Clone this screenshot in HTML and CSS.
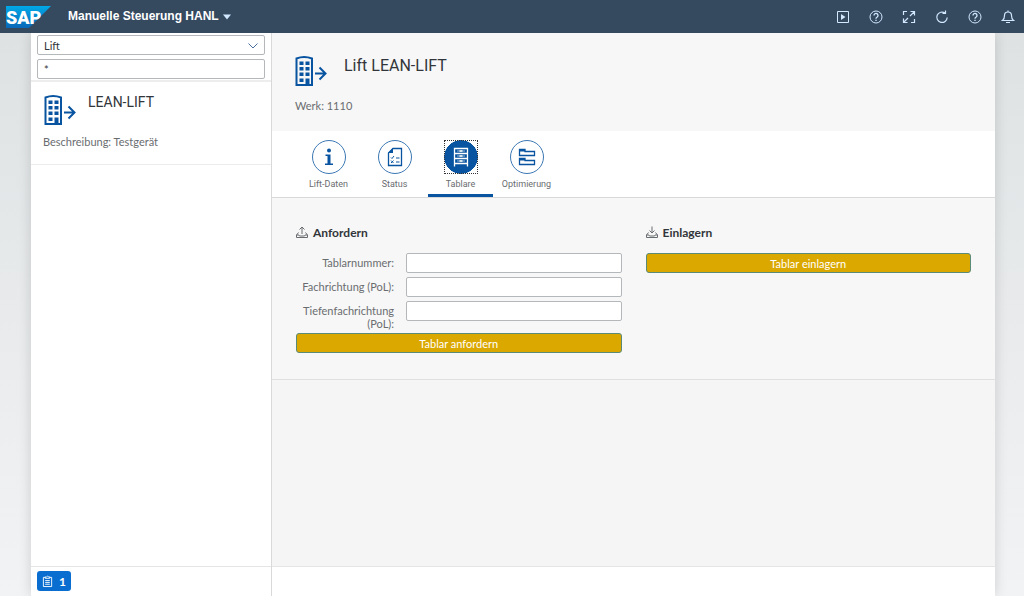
FILE: index.html
```html
<!DOCTYPE html>
<html lang="de">
<head>
    <meta charset="UTF-8">
    <meta name="viewport" content="width=device-width, initial-scale=1.0">
    <title>Manuelle Steuerung HANL</title>
    <link rel="stylesheet" href="styles.css">
</head>
<body>
    <!-- Shared symbols -->
    <svg class="symbols" aria-hidden="true">
        <symbol id="lift" viewBox="0 0 32 32">
            <path d="M1.500 30V3.500Q9 .5 17 3.500V30Z" fill="none" stroke="currentColor" stroke-width="2"/>
            <path d="M4.500 6.500h4v3.500h-4zM10.500 6.500h4v3.500h-4zM4.500 12h4v3.500h-4zM10.500 12h4v3.500h-4zM4.500 17.500h4v3.500h-4zM10.500 17.500h4v3.500h-4zM4.500 23.500h4v3.500h-4zM10.500 23.500h4v6h-4z" fill="currentColor"/>
            <path d="M20 18.500h10M24.500 12.500l6 6-6 6" fill="none" stroke="currentColor" stroke-width="2"/>
        </symbol>
        <symbol id="help" viewBox="0 0 14 14">
            <circle cx="7" cy="7" r="6"/>
            <path d="M5 5.500a2 2 0 1 1 3.200 1.500Q7 7.700 7 8.700M7 9.700v1.300" stroke-width="1.300"/>
        </symbol>
    </svg>

    <header class="shell">
        <svg class="logo" viewBox="0 0 45 22" role="img" aria-label="SAP">
            <defs>
                <linearGradient id="sapBlue" x1="0" y1="0" x2="0" y2="1">
                    <stop offset="0" stop-color="#00a9e8"/>
                    <stop offset="1" stop-color="#0a67b8"/>
                </linearGradient>
            </defs>
            <path d="M0 0H45L23 22H0Z" fill="url(#sapBlue)"/>
            <text class="logo-text" x="0" y="18">SAP</text>
        </svg>
        <button class="shell-title">Manuelle Steuerung HANL
            <svg class="caret" viewBox="0 0 8 6"><path d="M0 .5h8L4 5.500z"/></svg>
        </button>
        <nav class="shell-actions">
            <button class="shell-btn" aria-label="Abspielen">
                <svg viewBox="0 0 14 14"><path d="M1.500 1.500h11v11h-11z"/><path class="solid" d="M5 4l4.500 3L5 10z"/></svg>
            </button>
            <button class="shell-btn" aria-label="Hilfe"><svg><use href="#help"/></svg></button>
            <button class="shell-btn" aria-label="Vollbild">
                <svg viewBox="0 0 14 14"><path d="M5 1.500H1.500V5M9 12.500h3.500V9M8.500 1.500H12.500v4M12.500 1.500L8 6M1.500 8.500V12.500h4M1.500 12.500l4.500-4.500" stroke-width="1.200"/></svg>
            </button>
            <button class="shell-btn" aria-label="Aktualisieren">
                <svg viewBox="0 0 14 14"><path d="M10 3A5.200 5.200 0 1 0 12.200 7.500M10.500 .5V3.500H7.500" stroke-width="1.200"/></svg>
            </button>
            <button class="shell-btn" aria-label="Support"><svg><use href="#help"/></svg></button>
            <button class="shell-btn" aria-label="Benachrichtigungen">
                <svg viewBox="0 0 14 14"><path d="M1.500 10.500Q3.500 9 3.500 5.500A3.500 3.500 0 0 1 10.500 5.500Q10.500 9 12.500 10.500ZM7 .5V2M5 12.500h4" stroke-width="1.200"/></svg>
            </button>
        </nav>
    </header>

    <div class="app">
        <aside class="sidebar">
            <div class="filter">
                <div class="select-wrap">
                    <select class="field" aria-label="Gerätetyp">
                        <option>Lift</option>
                    </select>
                    <svg class="chevron" viewBox="0 0 10 6"><path d="M.5 .5L5 5 9.500 .5"/></svg>
                </div>
                <input class="field" type="text" value="*" aria-label="Suche">
            </div>
            <div class="device">
                <div class="device-head">
                    <svg class="lift-icon"><use href="#lift"/></svg>
                    <h2 class="device-name">LEAN-LIFT</h2>
                </div>
                <p class="note">Beschreibung: Testgerät</p>
            </div>
            <footer class="sidebar-footer">
                <button class="messages">
                    <svg viewBox="0 0 12 14"><path d="M3.500 2.500h-2v10h9v-10h-2M3.500 3.500V2h1.500Q6 0 7 2h1.500v1.500zM3.500 6h5M3.500 8h5M3.500 10h5"/></svg>
                    1
                </button>
            </footer>
        </aside>

        <main class="main">
            <div class="object-header">
                <div class="object-head">
                    <svg class="lift-icon"><use href="#lift"/></svg>
                    <h1 class="object-title">Lift LEAN-LIFT</h1>
                </div>
                <p class="note">Werk: 1110</p>
            </div>

            <div class="tabs" role="tablist">
                <button class="tab" role="tab">
                    <span class="tab-icon">
                        <svg viewBox="0 0 20 20"><circle class="solid" cx="10" cy="3.500" r="2"/><path class="solid" d="M6.500 7.500h5v9h2.500v1.500h-8V16.500h2.500V9h-2z"/></svg>
                    </span>
                    Lift-Daten
                </button>
                <button class="tab" role="tab">
                    <span class="tab-icon">
                        <svg viewBox="0 0 20 20"><path d="M8 1.500h8.500v17h-13V6z" stroke-width="1.300"/><path class="solid" d="M8 1v5H3z"/><path d="M6 10.500l1 1 2-2.500M11 11h3.500M6 13.500l2.500 2.500M8.500 13.500L6 16M11 15h3.500"/></svg>
                    </span>
                    Status
                </button>
                <button class="tab active" role="tab" aria-selected="true">
                    <span class="tab-icon">
                        <svg viewBox="0 0 20 20"><path d="M3.500 19.500V1.500h13V19.500M3.500 6.500h13M3.500 11.500h13M3.500 16.500h13" stroke-width="1.300"/><path d="M6 4h8M6 9h8M6 14h8" stroke-opacity=".6"/><path d="M8.500 4h3M8.500 9h3M8.500 14h3" stroke-width="1.500"/></svg>
                    </span>
                    Tablare
                </button>
                <button class="tab" role="tab">
                    <span class="tab-icon">
                        <svg viewBox="0 0 20 20"><path d="M2.500 2.500H8V4.500h9.500v4h-15zM2.500 11.500H8V13.500h9.500v4h-15z" stroke-width="1.300"/><path d="M2.500 3.500H8M2.500 12.500H8" stroke-width="2"/></svg>
                    </span>
                    Optimierung
                </button>
            </div>

            <div class="panels">
                <form class="panel">
                    <h3 class="panel-title">
                        <svg viewBox="0 0 12 12"><path d="M6 8V1M3.500 3.500L6 1l2.500 2.500M2.500 6.500L.5 9v2.500h11V9l-2-2.500M.5 9H3q0 1 1 1h4q1 0 1-1h2.500"/></svg>
                        Anfordern
                    </h3>
                    <div class="form-row">
                        <label for="tablar">Tablarnummer:</label>
                        <input class="field" type="text" id="tablar">
                    </div>
                    <div class="form-row">
                        <label for="fach">Fachrichtung (PoL):</label>
                        <input class="field" type="text" id="fach">
                    </div>
                    <div class="form-row">
                        <label for="tiefe">Tiefenfachrichtung (PoL):</label>
                        <input class="field" type="text" id="tiefe">
                    </div>
                    <button type="button" class="btn">Tablar anfordern</button>
                </form>
                <div class="panel">
                    <h3 class="panel-title">
                        <svg viewBox="0 0 12 12"><path d="M6 .5V7M3.500 4.500L6 7l2.500-2.500M2.500 6.500L.5 9v2.500h11V9l-2-2.500M.5 9H3q0 1 1 1h4q1 0 1-1h2.500"/></svg>
                        Einlagern
                    </h3>
                    <button type="button" class="btn">Tablar einlagern</button>
                </div>
            </div>
            <footer class="main-footer"></footer>
        </main>
    </div>
</body>
</html>
```
FILE: styles.css
```css
* {
    box-sizing: border-box;
}

body {
    display: flex;
    flex-direction: column;
    min-height: 100vh;
    margin: 0;
    font-family: Lato, Roboto, sans-serif;
    font-size: 11px;
    line-height: 13px;
    color: #32363a;
    background: linear-gradient(#dde1e2, #f2f3f5);
}

h1, h2, h3, p {
    margin: 0;
    font-weight: normal;
}

button, input, select {
    font: inherit;
}

button {
    border: none;
    padding: 0;
    background: none;
    cursor: pointer;
}

svg {
    fill: none;
    stroke: currentColor;
    flex: none;
}

.symbols {
    position: absolute;
    width: 0;
    height: 0;
}

.solid {
    fill: currentColor;
    stroke: none;
}

/* Shell bar */
.shell {
    display: flex;
    align-items: center;
    height: 33px;
    padding: 0 9px 0 6px;
    background-color: #354a5f;
    color: #d1e8ff;
}

.logo {
    width: 45px;
    height: 22px;
    stroke: none;
}

.logo-text {
    font-family: Roboto, sans-serif;
    font-size: 18px;
    font-weight: 900;
    fill: #fff;
}

.shell-title {
    display: flex;
    align-items: center;
    gap: 4px;
    margin-left: 17px;
    font-family: "Liberation Sans", sans-serif;
    font-size: 12px;
    font-weight: bold;
    color: #fff;
}

.caret {
    width: 8px;
    height: 6px;
    fill: #d1e8ff;
    stroke: none;
}

.shell-actions {
    display: flex;
    gap: 19px;
    margin-left: auto;
}

.shell-btn {
    display: flex;
    color: inherit;
}

.shell-btn svg {
    width: 14px;
    height: 14px;
}

/* App frame */
.app {
    flex: 1;
    display: flex;
    margin: 0 29px 0 31px;
    background-color: #fff;
    box-shadow: 0 0 12px rgba(0, 0, 0, 0.15);
    clip-path: inset(0 -20px);
}

.sidebar {
    display: flex;
    flex-direction: column;
    width: 241px;
    border-right: 1px solid #d9d9d9;
}

.filter {
    display: flex;
    flex-direction: column;
    gap: 4px;
    padding: 2px 6px 1px;
    border-bottom: 2px solid #ededed;
}

.field {
    width: 100%;
    height: 20px;
    padding: 0 6px;
    border: 1px solid #b5b8ba;
    border-radius: 2px;
    background-color: #fff;
    color: #32363a;
}

.select-wrap {
    display: flex;
    position: relative;
}

select.field {
    appearance: none;
}

.chevron {
    position: absolute;
    right: 7px;
    top: 8px;
    width: 10px;
    height: 6px;
    color: #4a6f9c;
    pointer-events: none;
}

.device {
    padding: 12px 12px 16px;
    border-bottom: 1px solid #ededed;
}

.device-head, .object-head {
    display: flex;
    align-items: flex-start;
}

.lift-icon {
    width: 32px;
    height: 32px;
    color: #0854a0;
    stroke: none;
}

.device-head {
    gap: 12px;
    padding: 0 1px;
}

.device-name, .object-title {
    font-family: Roboto, sans-serif;
}

.device-name {
    font-size: 14px;
    line-height: 16px;
}

.note {
    margin-top: 9px;
    color: #6a6d70;
}

.sidebar-footer, .main-footer {
    display: flex;
    align-items: center;
    height: 30px;
    margin-top: auto;
    padding: 0 6px 1px;
    border-top: 1px solid #e5e5e5;
    background-color: #fff;
}

.messages {
    display: flex;
    align-items: center;
    justify-content: center;
    gap: 6px;
    width: 34px;
    height: 20px;
    border-radius: 3px;
    background-color: #0a6ed1;
    color: #fff;
    font-size: 12px;
    font-weight: bold;
}

.messages svg {
    width: 11px;
    height: 13px;
}

/* Main area */
.main {
    flex: 1;
    display: flex;
    flex-direction: column;
    background-color: #f5f5f5;
}

.object-header {
    height: 98px;
    padding: 22px 23px;
    background-color: #f7f7f7;
}

.object-head {
    gap: 17px;
}

.object-title {
    font-size: 16px;
    line-height: 22px;
}

.object-header .note {
    margin-top: 12px;
}

.tabs {
    display: flex;
    gap: 1px;
    padding: 9px 24px 0;
    border-bottom: 1px solid #d9d9d9;
    background-color: #fff;
}

.tab {
    display: flex;
    flex-direction: column;
    align-items: center;
    gap: 4px;
    width: 65px;
    height: 57px;
    border-bottom: 3px solid transparent;
    font-family: Roboto, sans-serif;
    font-size: 9px;
    line-height: 12px;
    color: #6a6d70;
}

.tab-icon {
    display: flex;
    align-items: center;
    justify-content: center;
    width: 34px;
    height: 34px;
    border: 1px solid #3c78b4;
    border-radius: 50%;
    color: #0854a0;
}

.tab-icon svg {
    width: 20px;
    height: 20px;
}

.tab.active {
    border-bottom-color: #0854a0;
}

.tab.active .tab-icon {
    border: none;
    border-radius: 0;
    background: radial-gradient(circle closest-side, #0854a0 97%, #fff 100%);
    color: #fff;
    outline: 1px dotted #333;
    outline-offset: -1px;
}

.panels {
    display: grid;
    grid-template-columns: 1fr 1fr;
    gap: 24px;
    padding: 26px 24px;
    border-bottom: 1px solid #e0e0e0;
    background-color: #f7f7f7;
}

.panel {
    display: flex;
    flex-direction: column;
}

.panel-title {
    display: flex;
    align-items: center;
    gap: 5px;
    height: 16px;
    margin-bottom: 13px;
    font-size: 12px;
    font-weight: bold;
}

.panel-title svg {
    width: 12px;
    height: 12px;
    color: #6a6d70;
}

.form-row {
    display: grid;
    grid-template-columns: 98px 1fr;
    gap: 12px;
    min-height: 24px;
}

.form-row label {
    padding: 3px 0;
    text-align: right;
    color: #6a6d70;
}

.btn {
    height: 20px;
    border: 1px solid #5a8a78;
    border-radius: 3px;
    background-color: #dba800;
    color: #fff;
}
```
